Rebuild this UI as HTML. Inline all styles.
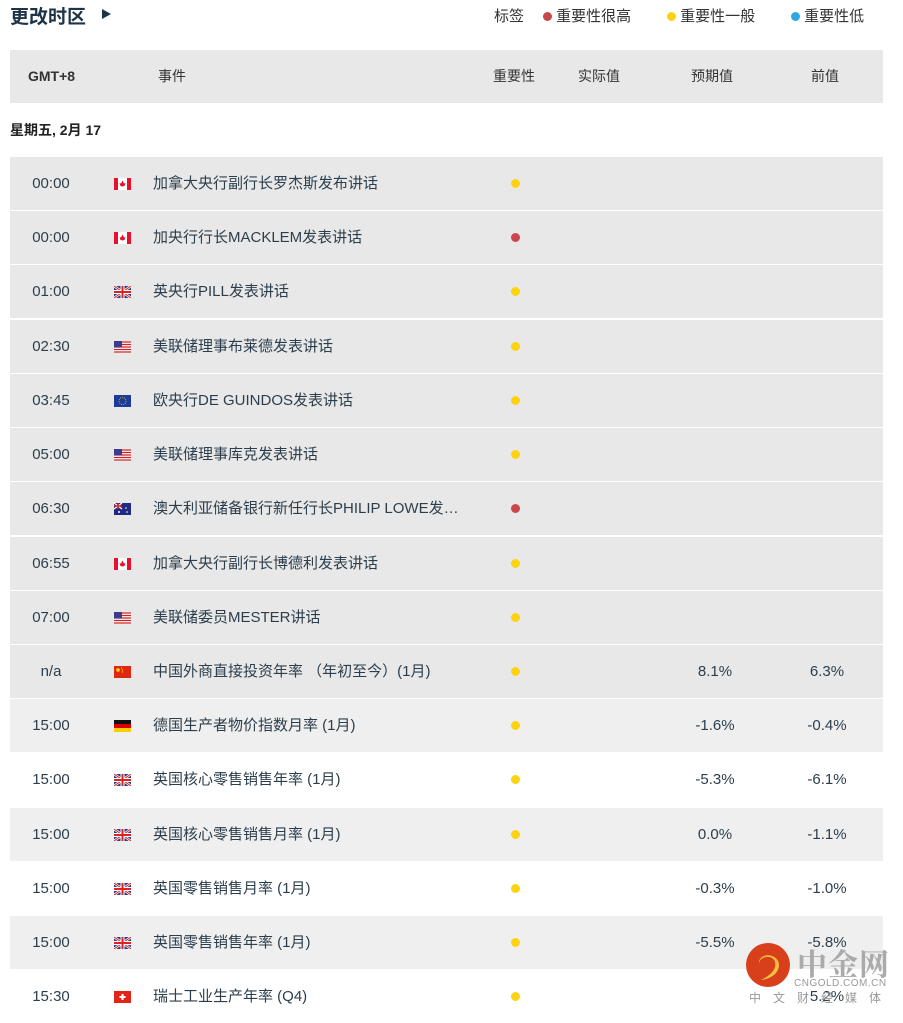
<!DOCTYPE html>
<html><head><meta charset="utf-8"><style>
*{margin:0;padding:0;box-sizing:border-box}
body{width:903px;height:1015px;overflow:hidden;background:#fff;font-family:"Liberation Sans","Noto Sans CJK SC",sans-serif;color:#2c3e4c;position:relative}
.title{position:absolute;left:10px;top:2px;font-size:19px;color:#1d3447;font-weight:bold}
.tri{position:absolute;left:102px;top:9px;width:0;height:0;border-left:9px solid #1d3447;border-top:5px solid transparent;border-bottom:5px solid transparent}
.legend{position:absolute;top:5px;font-size:15px;color:#333}
.dot{display:inline-block;width:9px;height:9px;border-radius:50%}
.hdr{position:absolute;left:10px;top:50px;width:873px;height:53px;background:#e8e8e8;font-size:14px;color:#333}
.hdr span{position:absolute;top:0;line-height:53px}
.date{position:absolute;left:10px;top:120px;font-size:14px;font-weight:bold;color:#222}
.row{position:absolute;left:10px;width:873px;height:53px;font-size:15px}
.row span{position:absolute;top:0;line-height:53px;white-space:nowrap}
.t{left:0;width:82px;text-align:center}
.f{position:absolute;left:104px;top:21px;width:17px;height:12px}
.e{left:143px}
.d{position:absolute;left:501px;top:22px;width:9px;height:9px;border-radius:50%}
.a{left:662px;width:86px;text-align:center}
.p{left:774px;width:86px;text-align:center}
.Y{background:#fbd313}.R{background:#c9474a}
</style></head><body>
<div class="title">更改时区</div><div class="tri"></div>
<div class="legend" style="left:494px">标签</div>
<div class="legend" style="left:543px"><span class="dot R"></span> 重要性很高</div>
<div class="legend" style="left:667px"><span class="dot Y"></span> 重要性一般</div>
<div class="legend" style="left:791px"><span class="dot" style="background:#2ea8e4"></span> 重要性低</div>
<div class="hdr"><span style="left:18px;font-weight:bold">GMT+8</span><span style="left:148px">事件</span><span style="left:483px">重要性</span><span style="left:568px">实际值</span><span style="left:681px">预期值</span><span style="left:801px">前值</span></div>
<div class="date">星期五, 2月 17</div>

<svg width="0" height="0" style="position:absolute"><defs>
<g id="ca"><rect width="17" height="12" fill="#fff"/><rect width="4" height="12" fill="#e8112d"/><rect x="13" width="4" height="12" fill="#e8112d"/><path d="M8.5 2.5L10 5.5 11.5 5 10.5 8 8.5 8.5 6.5 8 5.5 5 7 5.5Z" fill="#e8112d"/></g>
<g id="uk"><rect width="17" height="12" fill="#2b3d8f"/><path d="M0 0L17 12M17 0L0 12" stroke="#fff" stroke-width="2.5"/><path d="M0 0L17 12M17 0L0 12" stroke="#d22" stroke-width="1"/><path d="M8.5 0V12M0 6H17" stroke="#fff" stroke-width="4"/><path d="M8.5 0V12M0 6H17" stroke="#d22" stroke-width="2"/></g>
<g id="us"><rect width="17" height="12" fill="#fff"/><path d="M0 1H17M0 3.5H17M0 6H17M0 8.5H17M0 11H17" stroke="#c22" stroke-width="1.2"/><rect width="8" height="6.5" fill="#3c3b8e"/></g>
<g id="eu"><rect width="17" height="12" fill="#1d3b9a"/><circle cx="8.5" cy="6" r="3.5" fill="none" stroke="#e6c200" stroke-width=".8" stroke-dasharray="1 1"/></g>
<g id="au"><rect width="17" height="12" fill="#1f2a80"/><path d="M0 0L8 6M8 0L0 6" stroke="#fff" stroke-width="1.2"/><path d="M4 0V6M0 3H8" stroke="#d22" stroke-width="1.5"/><circle cx="12" cy="5" r=".8" fill="#fff"/><circle cx="13" cy="9" r=".8" fill="#fff"/><circle cx="5" cy="9" r="1" fill="#fff"/></g>
<g id="cn"><rect width="17" height="12" fill="#de2910"/><circle cx="4" cy="4" r="1.8" fill="#ffde00"/><circle cx="7.5" cy="2" r=".6" fill="#ffde00"/><circle cx="8.5" cy="4" r=".6" fill="#ffde00"/><circle cx="8.5" cy="6" r=".6" fill="#ffde00"/></g>
<g id="de"><rect width="17" height="4" fill="#111"/><rect y="4" width="17" height="4" fill="#dd0000"/><rect y="8" width="17" height="4" fill="#ffce00"/></g>
<g id="ch"><rect width="17" height="12" fill="#e2231a"/><path d="M8.5 3V9M5.5 6H11.5" stroke="#fff" stroke-width="2"/></g>
</defs></svg>

<div class="row" style="top:157px;background:#e8e8e8"><span class="t">00:00</span><svg class="f"><use href="#ca"/></svg><span class="e">加拿大央行副行长罗杰斯发布讲话</span><div class="d Y"></div></div>
<div class="row" style="top:211px;background:#e8e8e8"><span class="t">00:00</span><svg class="f"><use href="#ca"/></svg><span class="e">加央行行长MACKLEM发表讲话</span><div class="d R"></div></div>
<div class="row" style="top:265px;background:#e8e8e8"><span class="t">01:00</span><svg class="f"><use href="#uk"/></svg><span class="e">英央行PILL发表讲话</span><div class="d Y"></div></div>
<div class="row" style="top:320px;background:#e8e8e8"><span class="t">02:30</span><svg class="f"><use href="#us"/></svg><span class="e">美联储理事布莱德发表讲话</span><div class="d Y"></div></div>
<div class="row" style="top:374px;background:#e8e8e8"><span class="t">03:45</span><svg class="f"><use href="#eu"/></svg><span class="e">欧央行DE GUINDOS发表讲话</span><div class="d Y"></div></div>
<div class="row" style="top:428px;background:#e8e8e8"><span class="t">05:00</span><svg class="f"><use href="#us"/></svg><span class="e">美联储理事库克发表讲话</span><div class="d Y"></div></div>
<div class="row" style="top:482px;background:#e8e8e8"><span class="t">06:30</span><svg class="f"><use href="#au"/></svg><span class="e">澳大利亚储备银行新任行长PHILIP LOWE发…</span><div class="d R"></div></div>
<div class="row" style="top:537px;background:#e8e8e8"><span class="t">06:55</span><svg class="f"><use href="#ca"/></svg><span class="e">加拿大央行副行长博德利发表讲话</span><div class="d Y"></div></div>
<div class="row" style="top:591px;background:#e8e8e8"><span class="t">07:00</span><svg class="f"><use href="#us"/></svg><span class="e">美联储委员MESTER讲话</span><div class="d Y"></div></div>
<div class="row" style="top:645px;background:#e8e8e8"><span class="t">n/a</span><svg class="f"><use href="#cn"/></svg><span class="e">中国外商直接投资年率 （年初至今）(1月)</span><div class="d Y"></div><span class="a">8.1%</span><span class="p">6.3%</span></div>
<div class="row" style="top:699px;background:#efefef"><span class="t">15:00</span><svg class="f"><use href="#de"/></svg><span class="e">德国生产者物价指数月率 (1月)</span><div class="d Y"></div><span class="a">-1.6%</span><span class="p">-0.4%</span></div>
<div class="row" style="top:753px;background:#fff"><span class="t">15:00</span><svg class="f"><use href="#uk"/></svg><span class="e">英国核心零售销售年率 (1月)</span><div class="d Y"></div><span class="a">-5.3%</span><span class="p">-6.1%</span></div>
<div class="row" style="top:808px;background:#efefef"><span class="t">15:00</span><svg class="f"><use href="#uk"/></svg><span class="e">英国核心零售销售月率 (1月)</span><div class="d Y"></div><span class="a">0.0%</span><span class="p">-1.1%</span></div>
<div class="row" style="top:862px;background:#fff"><span class="t">15:00</span><svg class="f"><use href="#uk"/></svg><span class="e">英国零售销售月率 (1月)</span><div class="d Y"></div><span class="a">-0.3%</span><span class="p">-1.0%</span></div>
<div class="row" style="top:916px;background:#efefef"><span class="t">15:00</span><svg class="f"><use href="#uk"/></svg><span class="e">英国零售销售年率 (1月)</span><div class="d Y"></div><span class="a">-5.5%</span><span class="p">-5.8%</span></div>
<div class="row" style="top:970px;background:#fff"><span class="t">15:30</span><svg class="f"><use href="#ch"/></svg><span class="e">瑞士工业生产年率 (Q4)</span><div class="d Y"></div><span class="p">5.2%</span></div>

<svg style="position:absolute;left:745px;top:942px" width="48" height="48"><circle cx="23" cy="23" r="22" fill="#d8401c"/><path d="M14 22c0-8 14-10 16-2 2 8-6 14-14 18 10-1 18-7 18-15 0-10-16-14-20-4z" fill="#f5c040"/><circle cx="21" cy="22" r="4" fill="#d8401c"/></svg>
<div style="position:absolute;left:797px;top:940px;font-size:30px;font-weight:bold;color:#aaa;font-family:'Noto Serif CJK SC',serif;letter-spacing:1px">中金网</div>
<div style="position:absolute;left:794px;top:978px;font-size:10px;color:#999;letter-spacing:.5px">CNGOLD.COM.CN</div>
<div style="position:absolute;left:749px;top:989px;font-size:12px;color:#999;letter-spacing:12px;white-space:nowrap">中文财经媒体</div>
</body></html>
